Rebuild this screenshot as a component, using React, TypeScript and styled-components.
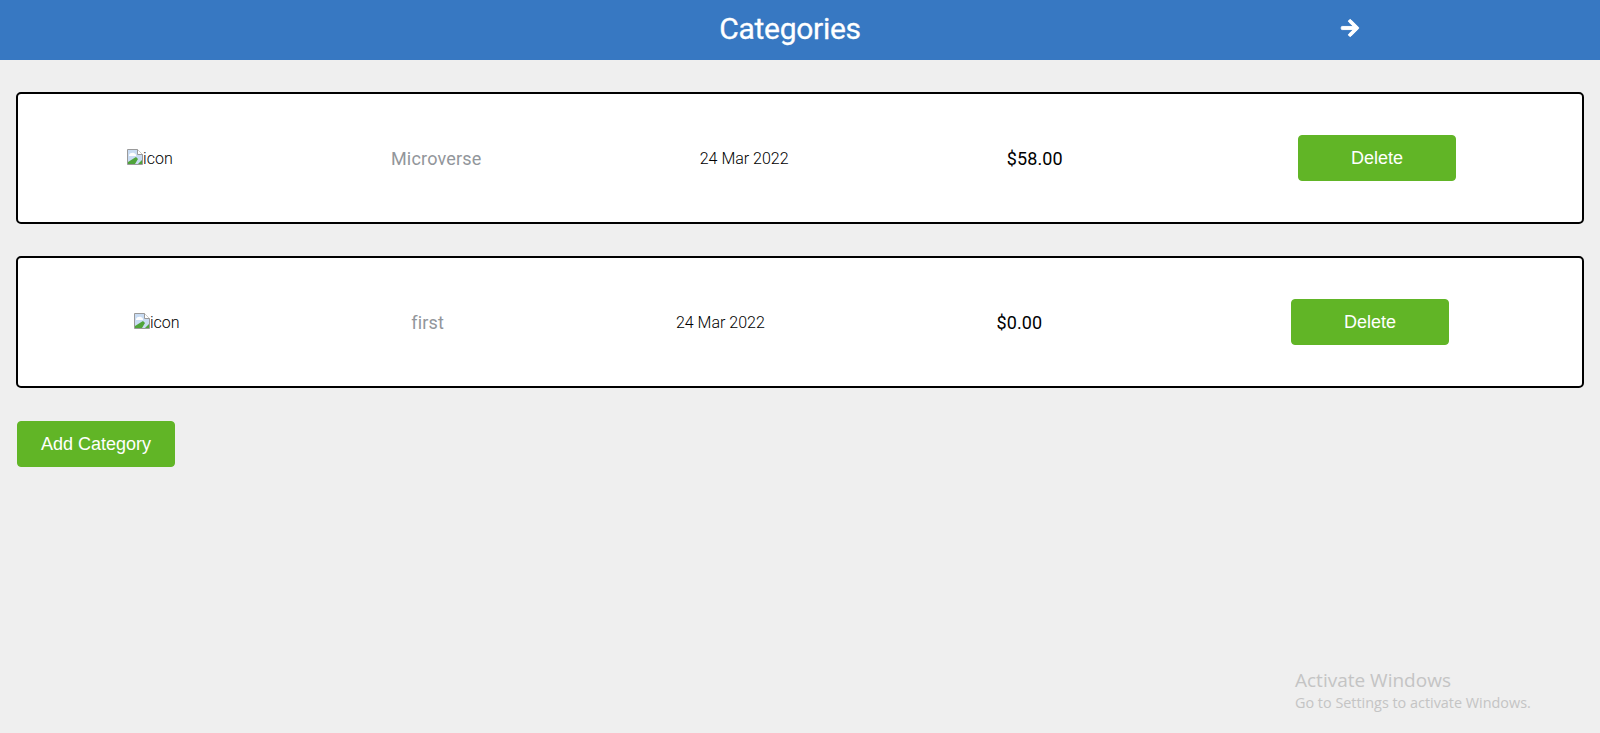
import { createGlobalStyle } from "styled-components";
import styled from "styled-components";
import { FaArrowRight } from "react-icons/fa";

const GlobalStyle = createGlobalStyle`
    html, body {
        margin: 0;
        padding: 0;
        height: 100%;
        background: #efefef;
        font-family: Roboto, sans-serif;
    }
`;

const Page = styled.div`
    position: relative;
    height: 733px;
    overflow: hidden;
`;

const Header = styled.header`
    display: flex;
    justify-content: space-around;
    align-items: center;
    height: 60px;
    background: #3778c2;
    color: #fff;
`;

const Title = styled.h1`
    margin: 0 0 3px;
    font-size: 30px;
    font-weight: 400;
    letter-spacing: -0.3px;
    -webkit-text-stroke: 0.3px #fff;
`;

const BackLink = styled.span`
    display: flex;
    width: 20px;
    justify-content: center;
    font-size: 20px;
    margin-top: -5px;

    svg {
        stroke: #fff;
        stroke-width: 24px;
    }
`;

const List = styled.main`
    display: flex;
    flex-direction: column;
    gap: 32px;
    margin: 32px 16px 0;
`;

const Row = styled.div`
    display: flex;
    justify-content: space-around;
    align-items: center;
    height: 132px;
    box-sizing: border-box;
    border: 2px solid #000;
    border-radius: 5px;
    background: #fff;
`;

const BrokenImage = styled.span`
    display: inline-flex;
    align-items: flex-start;
    font-size: 16px;
    font-weight: 300;
    color: #000;
`;

const Name = styled.span`
    font-size: 18px;
    letter-spacing: 0.2px;
    color: #92969b;
`;

const DateText = styled.span`
    font-size: 16px;
    font-weight: 300;
    color: #000;
`;

const Price = styled.span`
    font-size: 18px;
    letter-spacing: 0.1px;
    color: #000;
`;

const GreenButton = styled.button`
    width: 158px;
    height: 46px;
    border: 1px solid #61b526;
    border-radius: 4px;
    background: #61b526;
    color: #fff;
    font-family: "Liberation Sans", Arial, sans-serif;
    font-size: 18px;
`;

const DeleteButton = styled(GreenButton)`
    margin: 0 17px;
`;

const AddButton = styled(GreenButton)`
    display: block;
    margin: 33px 0 0 17px;
`;

const Watermark = styled.div`
    position: absolute;
    left: 1295px;
    top: 668px;
    color: #c4c4c4;
    font-family: "Open Sans", sans-serif;
`;

const WatermarkTitle = styled.div`
    font-size: 19px;
    line-height: 25px;
`;

const WatermarkText = styled.div`
    font-size: 14.4px;
    line-height: 20px;
`;

function BrokenIcon() {
    return (
        <svg width="16" height="16" viewBox="0 0 16 16">
            <path d="M0.5 0.5H10.5L15.5 5.5V15.5H0.5Z" fill="#c9dcf3" stroke="#9a9a9a" />
            <path d="M10.5 0.5V5.5H15.5" fill="#fff" stroke="#9a9a9a" />
            <path d="M2 6C3 3.5 7 3 9 5.5V7H2Z" fill="#fff" />
            <path d="M1 15V13L9 8L11 10L8 15Z" fill="#4fa43a" />
            <path d="M11 15L15 11V15Z" fill="#4fa43a" />
        </svg>
    );
}

const categories = [
    { name: "Microverse", date: "24 Mar 2022", price: "$58.00" },
    { name: "first", date: "24 Mar 2022", price: "$0.00" },
];

export default function App() {
    return (
        <Page>
            <GlobalStyle />
            <Header>
                <span />
                <Title>Categories</Title>
                <BackLink>
                    <FaArrowRight />
                </BackLink>
            </Header>
            <List>
                {categories.map(c => (
                    <Row key={c.name}>
                        <BrokenImage>
                            <BrokenIcon />
                            icon
                        </BrokenImage>
                        <Name>{c.name}</Name>
                        <DateText>{c.date}</DateText>
                        <Price>{c.price}</Price>
                        <DeleteButton>Delete</DeleteButton>
                    </Row>
                ))}
            </List>
            <AddButton>Add Category</AddButton>
            <Watermark>
                <WatermarkTitle>Activate Windows</WatermarkTitle>
                <WatermarkText>Go to Settings to activate Windows.</WatermarkText>
            </Watermark>
        </Page>
    );
}
